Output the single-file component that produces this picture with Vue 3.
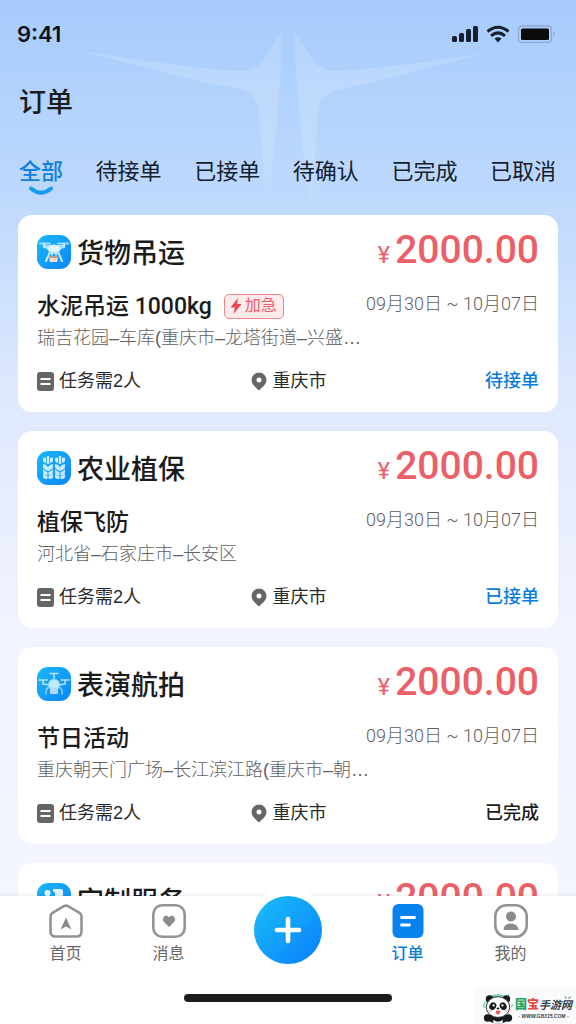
<script setup>
import { ref } from 'vue'

const tabs = ['全部', '待接单', '已接单', '待确认', '已完成', '已取消']
const activeTab = ref('全部')

const orders = [
  { type: '货物吊运', icon: 'cargo', title: '水泥吊运 1000kg', urgent: true, address: '瑞吉花园–车库(重庆市–龙塔街道–兴盛…', status: '待接单' },
  { type: '农业植保', icon: 'crop', title: '植保飞防', address: '河北省–石家庄市–长安区', status: '已接单' },
  { type: '表演航拍', icon: 'aerial', title: '节日活动', address: '重庆朝天门广场–长江滨江路(重庆市–朝…', status: '已完成', done: true },
  { type: '定制服务', icon: 'custom' }
]
</script>

<template>
  <div class="page">
    <svg class="backdrop" viewBox="0 0 576 210" aria-hidden="true">
      <defs>
        <linearGradient id="wing" x1="0" y1="0" x2="0" y2="1">
          <stop offset="0" stop-color="#fff" stop-opacity=".1" />
          <stop offset=".3" stop-color="#fff" stop-opacity=".17" />
          <stop offset=".8" stop-color="#fff" stop-opacity=".14" />
          <stop offset="1" stop-color="#fff" stop-opacity=".03" />
        </linearGradient>
      </defs>
      <path fill="url(#wing)" d="M82 52 C120 55 180 68 240 71 Q258 70 264 60 L282 30 Q281 80 277 120 L270 190 L265 190 L259 112 Q257 94 240 89 C185 80 130 62 82 52Z" />
      <path fill="url(#wing)" d="M486 53 C440 60 380 69 336 71 Q318 70 312 58 L294 30 Q295 80 301 128 L309 205 L313 190 L318 112 Q319 96 336 90 C390 80 440 64 486 53Z" />
    </svg>

    <header class="top">
      <div class="statusbar">
        <span class="clock">9:41</span>
        <svg class="signals" viewBox="0 0 104 18" aria-hidden="true">
          <g fill="#17202e">
            <rect x="0" y="11" width="5" height="6" rx="1.5" />
            <rect x="7" y="8" width="5" height="9" rx="1.5" />
            <rect x="14" y="4" width="5" height="13" rx="1.5" />
            <rect x="21" y="1" width="5" height="16" rx="1.5" />
            <path d="M42.500 13.500Q46 11 49.500 13.500L46 17.500Z" />
            <rect x="69" y="3.500" width="28" height="11.500" rx="1.500" fill="#0c0c0e" />
            <path d="M101.500 6.500q2.500 2.500 0 5z" fill="#8aa0bf" />
          </g>
          <g fill="none" stroke="#17202e" stroke-width="3">
            <path d="M35.500 6.500Q46 -2 56.500 6.500" />
            <path d="M39 10.800Q46 5 53 10.800" />
          </g>
          <rect x="66.500" y="1" width="33" height="16.500" rx="3.500" fill="none" stroke="#8fa9cf" stroke-width="1.300" />
        </svg>
      </div>
      <h1>订单</h1>
      <nav class="tabs" aria-label="订单状态">
        <button v-for="t in tabs" :key="t" type="button" class="tab" :class="{ active: t === activeTab }" @click="activeTab = t">
          {{ t }}
          <svg v-if="t === activeTab" class="smile" viewBox="0 0 24 10" aria-hidden="true">
            <path d="M2 2.500Q12 11 22 2.500" fill="none" stroke="#159bf2" stroke-width="4" stroke-linecap="round" />
          </svg>
        </button>
      </nav>
    </header>

    <main class="list">
      <article v-for="o in orders" :key="o.type" class="card">
        <div class="head">
          <svg class="badge" viewBox="0 0 34 34" aria-hidden="true">
            <defs>
              <linearGradient :id="'bg-' + o.icon" x1="0" y1="0" x2="1" y2="1">
                <stop offset="0" stop-color="#1cb8f6" />
                <stop offset="1" stop-color="#0a86fb" />
              </linearGradient>
            </defs>
            <rect width="34" height="34" rx="11" :fill="`url(#bg-${o.icon})`" />
            <g v-if="o.icon === 'cargo'">
              <path d="M3 8.500h10M21 8.500h10" stroke="#9fdcfb" stroke-width="2" stroke-linecap="round" />
              <path d="M7 9v3l7 2M27 9v3l-7 2M13 17l-4 9M21 17l4 9" fill="none" stroke="#c9ecfd" stroke-width="2" stroke-linecap="round" />
              <path d="M5 10l10 0 2-1 2 1 10 0-5 4-3 5h-8l-3-5z" fill="#a9e0fc" />
              <ellipse cx="17" cy="13.500" rx="6" ry="3.500" fill="#e3f6fe" />
              <path d="M15 18v4M19 18v4" stroke="#fff" />
              <rect x="12.500" y="21" width="8" height="6" rx="1" fill="#f5ded2" />
              <path d="M13 22h7" stroke="#bf8069" stroke-width="1.500" />
            </g>
            <g v-else-if="o.icon === 'crop'" fill="#c4ebff">
              <g v-for="x in [6, 18]" :key="x" :transform="`translate(${x} 5)`">
                <path d="M0 2q2-1 3 0V7q-2 0-3-2zM3.800 0h2.400v8H3.800zM7 2q2-1 3 0v3q-1 2-3 2z" />
                <path d="M0 8q3 0 5 3 2-3 5-3v3q-1 3-5 4-4-1-5-4z" />
                <path d="M0 13q2 3 4.500 3v3.500q-4.500 0-4.500-3.500zM10 13q-2 3-4.500 3v3.500q4.500 0 4.500-3.500zM0 18q2 2 4.500 2v3q-4.500 0-4.500-2zM10 18q-2 2-4.500 2v3q4.500 0 4.500-2z" />
              </g>
            </g>
            <g v-else-if="o.icon === 'aerial'" fill="none" stroke="#b8e5fd" stroke-width="1.500" stroke-linecap="round">
              <path d="M13 6.500h8M17 7v5M2 13h8M24 13h8M6 13v4l7 1M28 13v4l-7 1" />
              <path d="M12 18q0-5 5-5t5 5l-1 3h-8z" fill="#c3eafe" />
              <path d="M12 20q-4 2-3 7M22 20q4 2 3 7" stroke="#83d0fb" />
              <rect x="13" y="21" width="8" height="6" rx="1" fill="#b9d9fc" stroke="none" />
            </g>
            <g v-else fill="#e2f5ff">
              <circle cx="10.500" cy="10" r="3" />
              <path d="M6 20q0-8 4.500-8t4.500 8z" />
              <path d="M16 6h8q2 0 2 2v5h-8V9h-2z" />
              <path d="M18 16h8v5h-8z" />
            </g>
          </svg>
          <h2>{{ o.type }}</h2>
          <p class="price"><span class="yen">¥</span>2000.00</p>
        </div>
        <template v-if="o.title">
          <div class="row">
            <h3>{{ o.title }}</h3>
            <span v-if="o.urgent" class="urgent">
              <svg viewBox="0 0 12 16" aria-hidden="true"><path d="M8 0L0.500 9.500H5L3.500 16L11.500 6H7Z" fill="#ef4450" /></svg>加急
            </span>
            <time>09月30日 ~ 10月07日</time>
          </div>
          <p class="address">{{ o.address }}</p>
          <div class="foot">
            <span class="meta">
              <svg class="task" viewBox="0 0 17 19" aria-hidden="true">
                <rect width="17" height="19" rx="3" fill="#666" />
                <path d="M3.500 7h10M3.500 12h10" stroke="#fff" stroke-width="1.800" />
              </svg>任务需2人
            </span>
            <span class="meta">
              <svg class="pin" viewBox="0 0 16 19" aria-hidden="true">
                <path fill="#666" fill-rule="evenodd" d="M8 .500a7.500 7.500 0 0 1 7.500 7.500C15.500 12.500 11 15.500 8 18.500 5 15.500.500 12.500.500 8A7.500 7.500 0 0 1 8 .500Zm0 5a2.500 2.500 0 1 0 0 5 2.500 2.500 0 0 0 0-5Z" />
              </svg>重庆市
            </span>
            <span class="state" :class="{ done: o.done }">{{ o.status }}</span>
          </div>
        </template>
      </article>
    </main>

    <footer class="bottom">
      <nav class="bar" aria-label="主导航">
        <a href="#home" class="item">
          <svg viewBox="0 0 34 34" aria-hidden="true">
            <path d="M14.500 2.300Q17 .900 19.500 2.300L30.500 8.800Q32.500 10 32.500 12.500V27.500Q32.500 32.500 27.500 32.500H6.500Q1.500 32.500 1.500 27.500V12.500Q1.500 10 3.500 8.800Z" fill="none" stroke="#939393" stroke-width="2.600" />
            <path d="M17 13.500L22.500 25.500 17 22.500 11.500 25.500Z" fill="#8b8b8b" />
          </svg>首页
        </a>
        <a href="#messages" class="item">
          <svg viewBox="0 0 34 34" aria-hidden="true">
            <rect x="1.300" y="1.300" width="31.400" height="31.400" rx="9" fill="none" stroke="#939393" stroke-width="2.600" />
            <path d="M17 23L12 18Q10 15.500 11.500 13.200 14 10.500 17 13.200 20 10.500 22.500 13.200 24 15.500 22 18Z" fill="#8b8b8b" />
          </svg>消息
        </a>
        <button type="button" class="add" aria-label="发布订单">
          <svg viewBox="0 0 28 28" aria-hidden="true"><path d="M14 3v22M3 14h22" stroke="#fff" stroke-width="4.600" stroke-linecap="round" /></svg>
        </button>
        <a href="#orders" class="item current" aria-current="page">
          <svg viewBox="0 0 34 34" aria-hidden="true">
            <rect x="1.500" width="31" height="34" rx="6" fill="#0883ee" />
            <path d="M10.500 13.500h13M10.500 21h8" stroke="#fff" stroke-width="2.800" stroke-linecap="round" />
          </svg>订单
        </a>
        <a href="#me" class="item">
          <svg viewBox="0 0 34 34" aria-hidden="true">
            <rect x="1.300" y="1.300" width="31.400" height="31.400" rx="11" fill="none" stroke="#939393" stroke-width="2.600" />
            <circle cx="17" cy="12.500" r="5" fill="#8b8b8b" />
            <path d="M9.500 25.500Q10.500 19.500 17 19.500T24.500 25.500Q24.500 26 24 26H10Q9.500 26 9.500 25.500Z" fill="#8b8b8b" />
          </svg>我的
        </a>
      </nav>
      <div class="indicator"></div>
    </footer>

    <aside class="mark">
      <svg class="panda" viewBox="0 0 34 32" aria-hidden="true">
        <path d="M5 9Q8 2 17 2T29 9" fill="none" stroke="#6ecf9b" stroke-width="2.500" />
        <path d="M3 15l-2-3M3 12V9M27 4l1-3M7 25l-3-3M31 14l2-2" stroke="#72cfa0" stroke-width="1.500" />
        <ellipse cx="17" cy="26" rx="11" ry="6" fill="#161a1c" />
        <circle cx="8" cy="6" r="4" fill="#161a1c" />
        <circle cx="26" cy="6" r="4" fill="#161a1c" />
        <ellipse cx="17" cy="14.500" rx="12.500" ry="11" fill="#fff" stroke="#22292b" />
        <ellipse cx="11.500" cy="13.500" rx="3.500" ry="4.200" fill="#161a1c" transform="rotate(30 11.500 13.500)" />
        <ellipse cx="22.500" cy="13.500" rx="3.500" ry="4.200" fill="#161a1c" transform="rotate(-30 22.500 13.500)" />
        <circle cx="12.300" cy="12.800" r="1.200" fill="#fff" />
        <circle cx="21.700" cy="12.800" r="1.200" fill="#fff" />
        <ellipse cx="17" cy="16" rx="1.500" ry="1" fill="#161a1c" />
        <path d="M14.500 18.500h5q-.500 4-2.500 4t-2.500-4z" fill="#e74f50" />
        <ellipse cx="8.500" cy="18.500" rx="2" ry="1" fill="#f6b5ae" />
        <ellipse cx="25.500" cy="18.500" rx="2" ry="1" fill="#f6b5ae" />
        <path d="M12 28q5 4 10 0v4H12z" fill="#fff" />
        <circle cx="6" cy="26" r="4" fill="#161a1c" />
        <circle cx="28" cy="26" r="4" fill="#161a1c" />
      </svg>
      <div class="words">
        <p class="name"><b class="green">国</b><b class="red">宝</b>手游网</p>
        <p class="site">- WWW.GB315.COM -</p>
      </div>
      <svg class="spark" viewBox="0 0 8 6" aria-hidden="true"><path d="M1 1l1.500 3M4 3.500L7 2" stroke="#5d8b83" fill="none" /></svg>
    </aside>
  </div>
</template>

<style>
body {
  margin: 0;
}
</style>

<style scoped>
.page {
  position: relative;
  display: flex;
  flex-direction: column;
  height: 100vh;
  overflow: hidden;
  background: linear-gradient(#a6cbfc 0, #bfd9fd 200px, #dfe9fd 400px, #f1f3ff 620px, #f5f6ff 100%);
  color: #1b1b1b;
  font-family: "Liberation Sans", "Noto Sans CJK SC", sans-serif;
}
h1, h2, h3, p {
  margin: 0;
}
svg {
  display: block;
  flex: none;
}
button {
  padding: 0;
  border: 0;
  background: none;
  font: inherit;
  color: inherit;
  cursor: pointer;
}
.backdrop {
  position: absolute;
  top: 0;
  left: 0;
  width: 100%;
}
.top {
  position: relative;
  flex: none;
  padding: 20px 20px 0 19px;
}
.statusbar {
  display: flex;
  align-items: center;
  justify-content: space-between;
  height: 28px;
  margin-left: -2px;
}
.clock {
  font: 600 22px/28px Inter, sans-serif;
  color: #0c1118;
}
.signals {
  width: 104px;
  height: 18px;
}
h1 {
  margin-top: 35px;
  font-size: 27px;
  line-height: 40px;
  font-weight: 500;
}
.tabs {
  display: flex;
  justify-content: space-between;
  margin-top: 32px;
}
.tab {
  position: relative;
  height: 34px;
  font-size: 22px;
  line-height: 34px;
  color: #14202e;
  white-space: nowrap;
}
.tab.active {
  color: #0d80e3;
  font-weight: 500;
}
.smile {
  position: absolute;
  left: 50%;
  top: 31px;
  width: 24px;
  height: 10px;
  margin-left: -12px;
}
.list {
  position: relative;
  flex: 1;
  min-height: 0;
  overflow: hidden;
  padding: 26px 18px 0;
}
.card {
  padding: 20px 19px 19px;
  margin-bottom: 19px;
  border-radius: 14px;
  background: #fff;
}
.head {
  display: flex;
  align-items: center;
  height: 34px;
}
.badge {
  width: 34px;
  height: 34px;
}
h2 {
  margin-left: 6px;
  padding-top: 4px;
  font-size: 27px;
  line-height: 34px;
  font-weight: 500;
}
.price {
  margin-left: auto;
  font: 500 39px/34px Roboto, "Liberation Sans", sans-serif;
  color: #ed5f68;
}
.yen {
  margin-right: 5px;
  font-size: 24px;
  font-weight: 400;
}
.row {
  display: flex;
  align-items: center;
  height: 32px;
  margin-top: 21px;
}
h3 {
  padding-top: 2px;
  font-family: Roboto, "Noto Sans CJK SC", sans-serif;
  font-size: 23px;
  line-height: 32px;
  font-weight: 500;
}
.urgent {
  display: flex;
  align-items: center;
  gap: 3px;
  height: 23px;
  margin-left: 12px;
  padding: 0 6px 0 5px;
  border: 1px solid #f0868c;
  border-radius: 5px;
  background: #fdeaea;
  color: #ec5f68;
  font-size: 16px;
  line-height: 24px;
}
.urgent svg {
  width: 12px;
  height: 16px;
}
time {
  margin-left: auto;
  padding-bottom: 4px;
  font-family: Roboto, "Noto Sans CJK SC", sans-serif;
  font-size: 18px;
  line-height: 28px;
  font-weight: 300;
  color: #606060;
  white-space: nowrap;
}
.address {
  overflow: hidden;
  font-size: 18px;
  line-height: 32px;
  font-weight: 300;
  color: #606060;
  white-space: nowrap;
  text-overflow: ellipsis;
}
.foot {
  display: grid;
  grid-template-columns: 214fr 178fr 109fr;
  align-items: center;
  margin-top: 15px;
  font-size: 18px;
  line-height: 24px;
  color: #2b2b2b;
}
.meta {
  display: flex;
  align-items: center;
  gap: 5px;
}
.task {
  width: 17px;
  height: 19px;
}
.pin {
  width: 16px;
  height: 19px;
}
.state {
  text-align: right;
  font-weight: 500;
  color: #0c7cda;
}
.state.done {
  color: #1b1b1b;
}
.bottom {
  position: relative;
  flex: none;
  padding-bottom: 22px;
  background: #fff;
  box-shadow: 0 -1px 4px rgba(60, 60, 90, .1);
}
.bar {
  display: grid;
  grid-template-columns: 1fr 1fr 136px 1fr 1fr;
  justify-items: center;
  height: 98px;
  padding: 0 14px;
}
.item {
  display: flex;
  flex-direction: column;
  align-items: center;
  gap: 4px;
  padding-top: 8px;
  font-size: 16px;
  line-height: 24px;
  color: #666;
  text-decoration: none;
}
.item svg {
  width: 34px;
  height: 34px;
}
.item.current {
  color: #0c7cda;
  font-weight: 500;
}
.add {
  display: grid;
  place-items: center;
  width: 68px;
  height: 68px;
  border-radius: 50%;
  background: linear-gradient(135deg, #1ac0f7, #0a7dfd);
  box-shadow: 0 0 0 8px #fff;
}
.add svg {
  width: 28px;
  height: 28px;
}
.indicator {
  width: 36%;
  height: 8px;
  margin: 0 auto;
  border-radius: 4px;
  background: #1d1d1f;
}
.mark {
  position: absolute;
  right: 0;
  bottom: 0;
  display: flex;
  align-items: center;
  gap: 1px;
  padding: 6px 4px 0 8px;
  background: #fbfbfb;
}
.panda {
  width: 32px;
  height: 31px;
}
.name {
  display: flex;
  align-items: center;
  font-size: 11px;
  line-height: 14px;
  font-weight: 700;
  font-style: italic;
  color: #33414c;
}
.name b {
  font-size: 12px;
  font-style: normal;
}
.green {
  color: #17a663;
}
.red {
  color: #e8483f;
}
.site {
  font-size: 5px;
  line-height: 8px;
  font-weight: 700;
  font-style: italic;
  text-align: center;
  color: #33414c;
}
.spark {
  position: absolute;
  right: 4px;
  top: 8px;
  width: 8px;
  height: 6px;
}
</style>
